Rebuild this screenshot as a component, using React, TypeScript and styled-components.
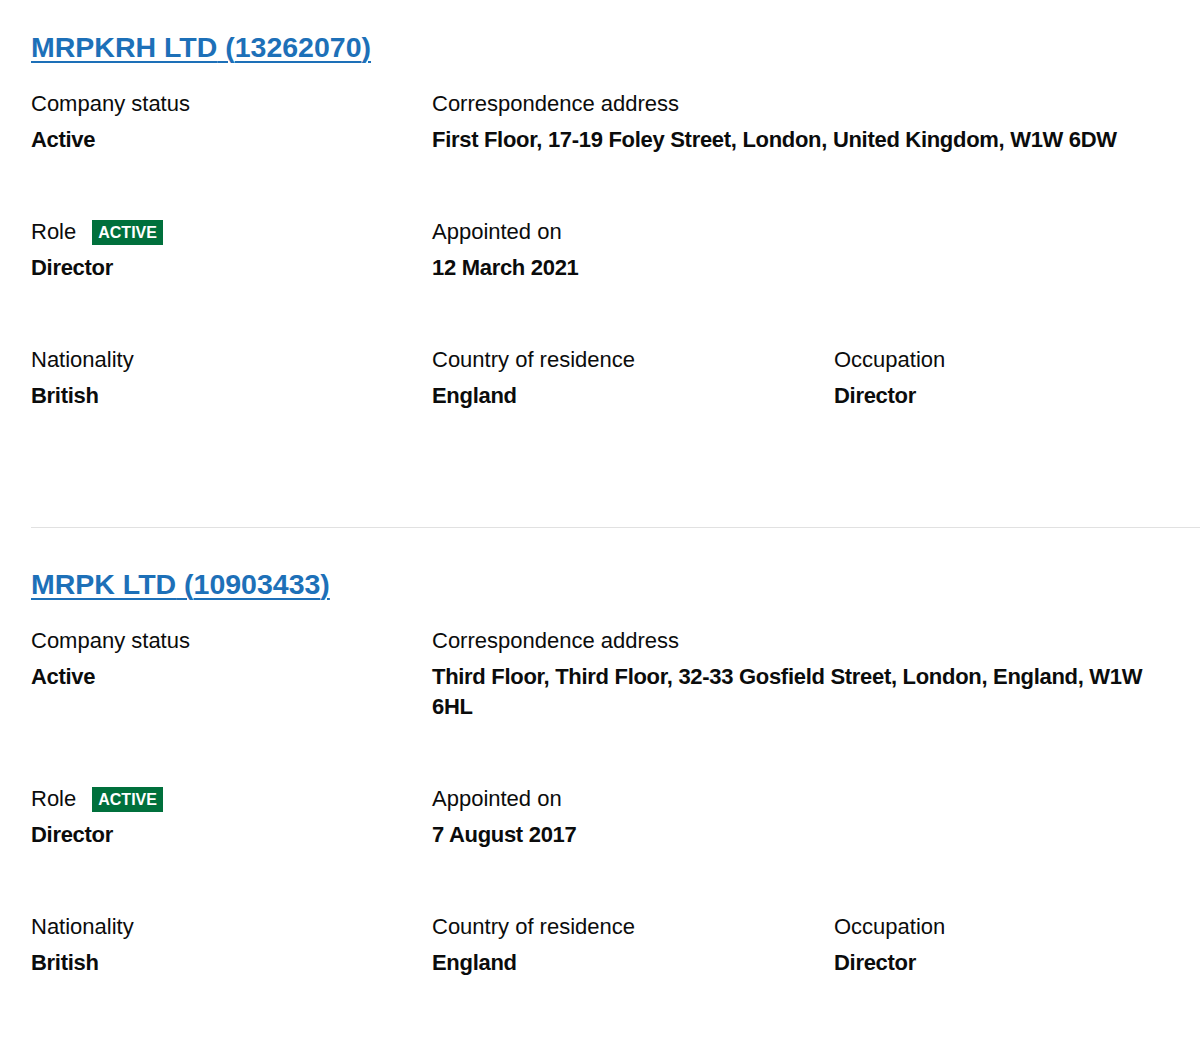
import React from "react";
import styled, { createGlobalStyle } from "styled-components";

const GlobalStyle = createGlobalStyle`
  body {
    margin: 0;
    background: #ffffff;
    color: #0b0c0c;
    font-family: "Liberation Sans", Arial, sans-serif;
  }
`;

const Page = styled.main`
  padding: 29px 0 40px 31px;
`;

const Appointment = styled.section``;

const Heading = styled.h2`
  margin: 0 0 24px;
  font-size: 28.5px;
  line-height: 36px;
  font-weight: 700;
`;

const HeadingLink = styled.a`
  color: #1d70b8;
  text-decoration: underline;
  text-decoration-thickness: 2px;
  text-underline-offset: 4px;
`;

const Fields = styled.dl`
  margin: 0;
  padding-right: 20px;
  display: grid;
  grid-template-columns: 401px 402px 1fr;
  row-gap: 62px;
`;

const Field = styled.div<{ $span?: number }>`
  grid-column: ${(p) => (p.$span ? `span ${p.$span}` : "auto")};
`;

const Label = styled.dt`
  margin: 0 0 6px;
  font-size: 22px;
  line-height: 30px;
  font-weight: 400;
  display: flex;
  align-items: center;
  gap: 16px;
`;

const Value = styled.dd`
  margin: 0;
  font-size: 22px;
  line-height: 30px;
  font-weight: 700;
  letter-spacing: -0.3px;
`;

const Tag = styled.strong`
  display: inline-block;
  background: #00703c;
  color: #ffffff;
  font-size: 16px;
  line-height: 25px;
  font-weight: 700;
  padding: 0 6px;
  text-transform: uppercase;
`;

const Divider = styled.hr`
  margin: 116px 0 38px;
  border: 0;
  border-top: 1px solid #e1e1e1;
`;

type Item = {
  name: string;
  number: string;
  status: string;
  address: string;
  appointed: string;
};

const items: Item[] = [
  {
    name: "MRPKRH LTD",
    number: "13262070",
    status: "Active",
    address: "First Floor, 17-19 Foley Street, London, United Kingdom, W1W 6DW",
    appointed: "12 March 2021",
  },
  {
    name: "MRPK LTD",
    number: "10903433",
    status: "Active",
    address:
      "Third Floor, Third Floor, 32-33 Gosfield Street, London, England, W1W 6HL",
    appointed: "7 August 2017",
  },
];

function AppointmentBlock({ item }: { item: Item }) {
  return (
    <Appointment>
      <Heading>
        <HeadingLink href="#">
          {item.name} ({item.number})
        </HeadingLink>
      </Heading>
      <Fields>
        <Field>
          <Label>Company status</Label>
          <Value>{item.status}</Value>
        </Field>
        <Field $span={2}>
          <Label>Correspondence address</Label>
          <Value>{item.address}</Value>
        </Field>

        <Field>
          <Label>
            Role <Tag>Active</Tag>
          </Label>
          <Value>Director</Value>
        </Field>
        <Field $span={2}>
          <Label>Appointed on</Label>
          <Value>{item.appointed}</Value>
        </Field>

        <Field>
          <Label>Nationality</Label>
          <Value>British</Value>
        </Field>
        <Field>
          <Label>Country of residence</Label>
          <Value>England</Value>
        </Field>
        <Field>
          <Label>Occupation</Label>
          <Value>Director</Value>
        </Field>
      </Fields>
    </Appointment>
  );
}

export default function App() {
  return (
    <>
      <GlobalStyle />
      <Page>
        {items.map((item, i) => (
          <React.Fragment key={item.number}>
            {i > 0 && <Divider />}
            <AppointmentBlock item={item} />
          </React.Fragment>
        ))}
      </Page>
    </>
  );
}
